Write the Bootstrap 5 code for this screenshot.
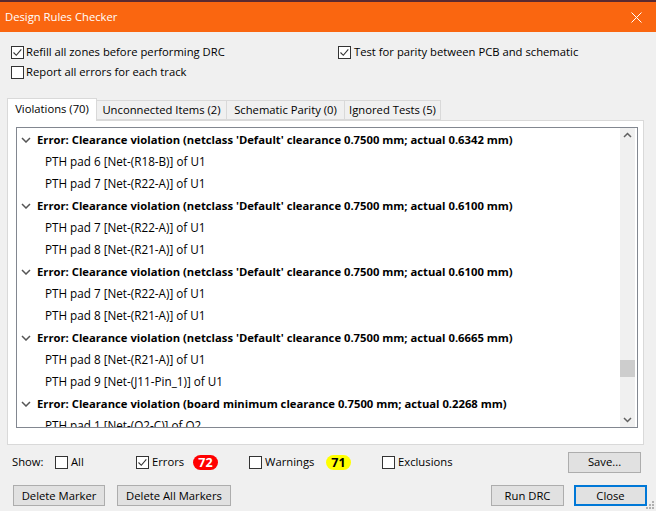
<!DOCTYPE html>
<html><head><meta charset="utf-8">
<link href="https://cdn.jsdelivr.net/npm/bootstrap@5.3.0/dist/css/bootstrap.min.css" rel="stylesheet">
<style>
html,body{margin:0;height:511px;overflow:hidden}
body{background:#f0f0f0;font-family:"Open Sans","Noto Sans","Liberation Sans",sans-serif;font-size:11.25px;color:#000;line-height:16px}
.topstrip{height:2px;background:#5a2a30}
.titlebar{height:30px;background:#fa6610;color:#fff;padding-left:5px}
.titlebar svg{margin-right:14px}
.optgrid{padding:10px 11px 0;height:66px}
.opt{gap:2px;height:20px}
.optw{gap:3px}
.box{width:13px;height:13px;border:1px solid #333;background:#fff;flex:none}
.leftopts{width:327px}
.tabstrip{margin-left:7px;height:22px}
.tabitem{border:1px solid #d9d9d9;border-left:0;background:#f0f0f0;height:20px;margin-top:2px;line-height:17px;text-align:center;white-space:nowrap}
.tabitem.on{background:#fff;border-left:1px solid #d9d9d9;border-bottom:0;height:23px;margin-top:0;line-height:19px;position:relative;z-index:1}
.tw1{width:90px}.tw2{width:130px}.tw3{width:118px}.tw4{width:96px}
.panel{margin-left:7px;width:637px;height:325px;background:#fff;border:1px solid #d9d9d9;padding:6px 5px 0 8px}
.treebox{height:301px;border:1px solid #828790;overflow:hidden}
.treelist{flex:1;overflow:hidden;padding-top:1px}
.rowerr,.rowpad{height:22px;white-space:nowrap}
.rowerr{line-height:22px;font-weight:700;padding-left:4px;gap:6px}
.rowpad{line-height:20px;padding-left:28px;font-size:11.7px}
.sbar{width:15px;background:#f0f0f0;margin-right:2px;position:relative}
.sthumb{position:absolute;left:0;top:232px;width:15px;height:17px;background:#cdcdcd}
.showrow{height:34px;padding-left:12px}
.btnw{background:#e1e1e1;border:1px solid #adadad;border-radius:0;color:#000;font-size:11.25px;line-height:16px;height:21px;padding:0;display:flex;align-items:center;justify-content:center;white-space:nowrap}
.pill{border-radius:9px;font-weight:700;font-size:12.5px;height:15px;width:25px;line-height:15px;text-align:center;flex:none}
.pred{background:#f00;color:#fff}
.pyel{background:#ff0;color:#000}
.btnrow{padding:0 9px 0 13px;margin-top:6px}
.closebtn{border:2px solid #0078d7}
.grip{position:absolute;right:1px;bottom:1px}
.w-show{width:43px}.w-all{width:81px}.w-err{width:113px}.w-warn{width:133px}.w-exc{width:186px}
.t-err{width:38px}.t-warn{width:58px}
.bw92{width:92px}.bw114{width:114px}.bw73{width:73px}
.gapb{margin-left:12px}.gapc{margin-left:10px}
</style></head><body>
<div class="topstrip"></div>
<div class="titlebar d-flex align-items-center justify-content-between"><span>Design Rules Checker</span>
<svg width="11" height="11" viewBox="0 0 11 11"><path d="M.5.5l10 10M10.5.5l-10 10" stroke="#fff" fill="none"/></svg></div>
<div class="optgrid d-flex">
<div class="leftopts">
<div class="opt d-flex align-items-center"><svg class="box" viewBox="0 0 11 11"><path d="M1.5 5.5l2.8 2.8 5-6" stroke="#333" fill="none" stroke-width="1.1"/></svg><span>Refill all zones before performing DRC</span></div>
<div class="opt d-flex align-items-center"><span class="box"></span><span>Report all errors for each track</span></div>
</div>
<div><div class="opt optw d-flex align-items-center"><svg class="box" viewBox="0 0 11 11"><path d="M1.5 5.5l2.8 2.8 5-6" stroke="#333" fill="none" stroke-width="1.1"/></svg><span>Test for parity between PCB and schematic</span></div></div>
</div>
<div class="tabstrip d-flex align-items-start">
<div class="tabitem on tw1">Violations (70)</div><div class="tabitem tw2">Unconnected Items (2)</div><div class="tabitem tw3">Schematic Parity (0)</div><div class="tabitem tw4">Ignored Tests (5)</div>
</div>
<div class="panel">
<div class="treebox d-flex">
<div class="treelist" id="t"></div>
<div class="sbar d-flex flex-column justify-content-between align-items-center py-1">
<svg width="9" height="6" viewBox="0 0 9 6"><path d="M1 5l3.5-3.5L8 5" stroke="#606060" stroke-width="1.5" fill="none"/></svg>
<svg width="9" height="6" viewBox="0 0 9 6"><path d="M1 1l3.5 3.5L8 1" stroke="#606060" stroke-width="1.5" fill="none"/></svg>
<div class="sthumb"></div></div>
</div></div>
<div class="showrow d-flex align-items-center">
<span class="w-show">Show:</span>
<span class="d-flex align-items-center opt optw w-all"><span class="box"></span>All</span>
<span class="d-flex align-items-center opt optw w-err"><svg class="box" viewBox="0 0 11 11"><path d="M1.5 5.5l2.8 2.8 5-6" stroke="#333" fill="none" stroke-width="1.1"/></svg><span class="t-err">Errors</span><span class="pill pred">72</span></span>
<span class="d-flex align-items-center opt optw w-warn"><span class="box"></span><span class="t-warn">Warnings</span><span class="pill pyel">71</span></span>
<span class="d-flex align-items-center opt optw w-exc"><span class="box"></span>Exclusions</span>
<button class="btn btnw bw73">Save...</button>
</div>
<div class="btnrow d-flex">
<button class="btn btnw bw92">Delete Marker</button>
<button class="btn btnw bw114 gapb">Delete All Markers</button>
<button class="btn btnw bw73 ms-auto">Run DRC</button>
<button class="btn btnw closebtn bw73 gapc">Close</button>
</div>
<svg class="grip" width="9" height="9" viewBox="0 0 9 9" fill="#b0b0b0"><rect x="6" y="0" width="2" height="2"/><rect x="3" y="3" width="2" height="2"/><rect x="6" y="3" width="2" height="2"/><rect x="0" y="6" width="2" height="2"/><rect x="3" y="6" width="2" height="2"/><rect x="6" y="6" width="2" height="2"/></svg>
<script src="https://cdn.jsdelivr.net/npm/bootstrap@5.3.0/dist/js/bootstrap.bundle.min.js"></script>
<script>
var chev='<svg width="10" height="6" viewBox="0 0 10 6"><path d="M1 1l4 4 4-4" stroke="#555" stroke-width="1.5" fill="none"/></svg>';
var d=[["netclass 'Default' clearance 0.7500 mm; actual 0.6342 mm","PTH pad 6 [Net-(R18-B)] of U1","PTH pad 7 [Net-(R22-A)] of U1"],
["netclass 'Default' clearance 0.7500 mm; actual 0.6100 mm","PTH pad 7 [Net-(R22-A)] of U1","PTH pad 8 [Net-(R21-A)] of U1"],
["netclass 'Default' clearance 0.7500 mm; actual 0.6100 mm","PTH pad 7 [Net-(R22-A)] of U1","PTH pad 8 [Net-(R21-A)] of U1"],
["netclass 'Default' clearance 0.7500 mm; actual 0.6665 mm","PTH pad 8 [Net-(R21-A)] of U1","PTH pad 9 [Net-(J11-Pin_1)] of U1"],
["board minimum clearance 0.7500 mm; actual 0.2268 mm","PTH pad 1 [Net-(Q2-C)] of Q2"]];
var h='';d.forEach(function(r){h+='<div class="rowerr d-flex align-items-center">'+chev+'<span>Error: Clearance violation ('+r[0]+')</span></div>';r.slice(1).forEach(function(p){h+='<div class="rowpad">'+p+'</div>'})});
document.getElementById('t').innerHTML=h;
</script>
</body></html>
